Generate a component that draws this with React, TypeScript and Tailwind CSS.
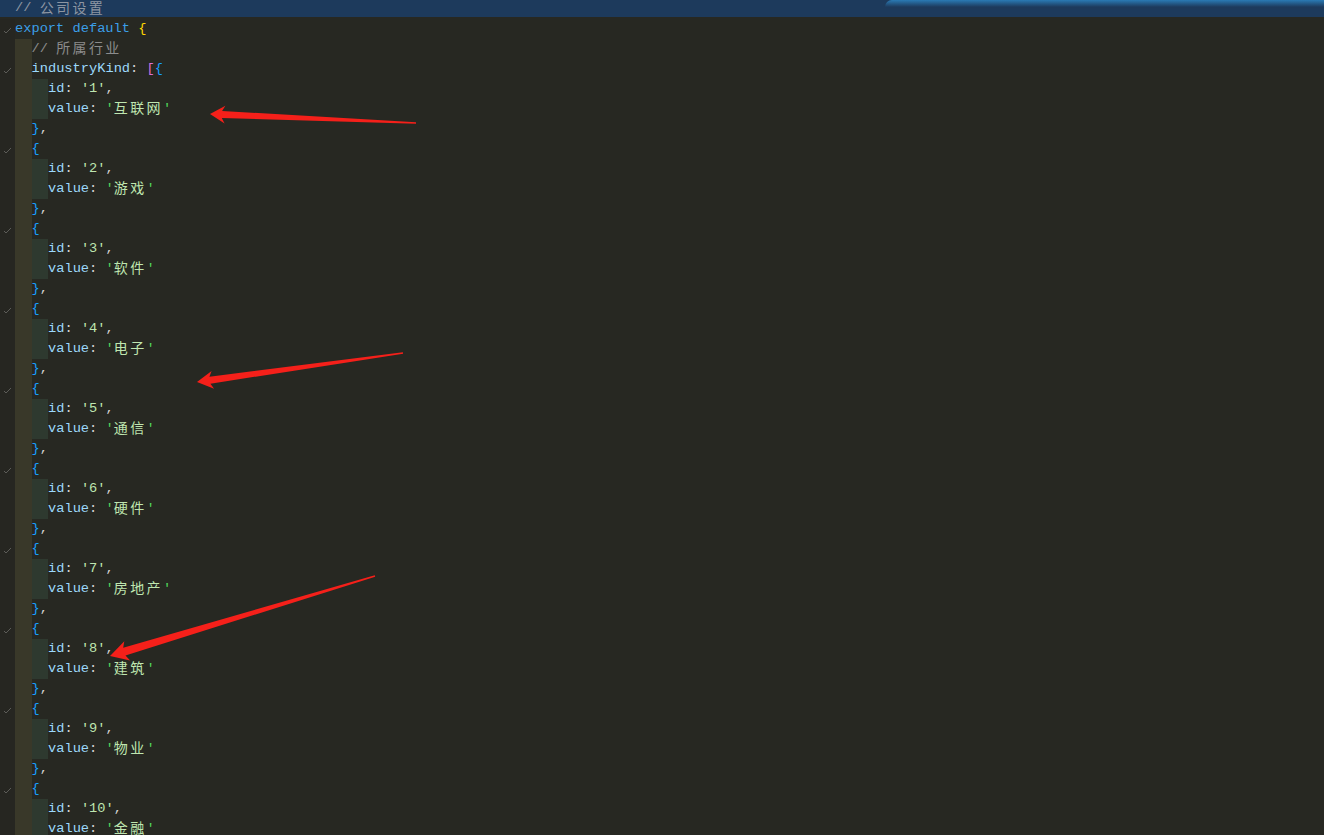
import React from "react";

type Seg = { t: string; c: string; cjk?: boolean };
type Line = { depth: number; segs: Seg[]; check?: boolean };

const C = {
  kw: "#3b9fe8",
  prop: "#9cd8fb",
  str: "#bfe6b0",
  q: "#52d45a",
  com: "#8c8c8c",
  pun: "#d4d4d4",
  gold: "#ffd700",
  orchid: "#da70d6",
  blue: "#179fff",
};

const values = ["互联网", "游戏", "软件", "电子", "通信", "硬件", "房地产", "建筑", "物业", "金融"];

const buildLines = (): Line[] => {
  const lines: Line[] = [
    {
      depth: 0,
      check: true,
      segs: [{ t: "export default", c: C.kw }, { t: " ", c: C.pun }, { t: "{", c: C.gold }],
    },
    { depth: 1, segs: [{ t: "// ", c: C.com }, { t: "所属行业", c: C.com, cjk: true }] },
    {
      depth: 1,
      check: true,
      segs: [
        { t: "industryKind", c: C.prop },
        { t: ": ", c: C.pun },
        { t: "[", c: C.orchid },
        { t: "{", c: C.blue },
      ],
    },
  ];
  values.forEach((v, i) => {
    if (i > 0) {
      lines.push({ depth: 1, segs: [{ t: "}", c: C.blue }, { t: ",", c: C.pun }] });
      lines.push({ depth: 1, check: true, segs: [{ t: "{", c: C.blue }] });
    }
    lines.push({
      depth: 2,
      segs: [
        { t: "id", c: C.prop },
        { t: ": ", c: C.pun },
        { t: "'", c: C.str },
        { t: String(i + 1), c: C.str },
        { t: "'", c: C.str },
        { t: ",", c: C.pun },
      ],
    });
    lines.push({
      depth: 2,
      segs: [
        { t: "value", c: C.prop },
        { t: ": ", c: C.pun },
        { t: "'", c: C.q },
        { t: v, c: C.str, cjk: true },
        { t: "'", c: C.q },
      ],
    });
  });
  return lines;
};

// arrow polygon from tail (t) to tip (p)
const arrow = (tx: number, ty: number, px: number, py: number, L: number, W: number, w: number, w0: number) => {
  const dx = px - tx;
  const dy = py - ty;
  const len = Math.hypot(dx, dy);
  const ux = dx / len;
  const uy = dy / len;
  const nx = -uy;
  const ny = ux;
  const neckX = px - ux * (L - 3);
  const neckY = py - uy * (L - 3);
  const barbX = px - ux * L;
  const barbY = py - uy * L;
  const pts = [
    [tx + nx * w0, ty + ny * w0],
    [neckX + nx * w, neckY + ny * w],
    [barbX + nx * W, barbY + ny * W],
    [px, py],
    [barbX - nx * W, barbY - ny * W],
    [neckX - nx * w, neckY - ny * w],
    [tx - nx * w0, ty - ny * w0],
  ];
  return pts.map((p) => `${p[0].toFixed(1)},${p[1].toFixed(1)}`).join(" ");
};

const Check = () => (
  <svg width="9" height="7" viewBox="0 0 9 7" className="mt-[2px]">
    <polyline points="1,4 3,6 8,1" fill="none" stroke="#5c5c58" strokeWidth="1" />
  </svg>
);

const CodeText = ({ segs }: { segs: Seg[] }) => (
  <div className="whitespace-pre h-[20px] leading-[20px]">
    {segs.map((s, j) =>
      s.cjk ? (
        <span
          key={j}
          className="inline-block align-top h-[20px] leading-[16px] text-[14px] tracking-[2.4px]"
          style={{ color: s.c, fontFamily: '"Noto Sans CJK SC", sans-serif' }}
        >
          {s.t}
        </span>
      ) : (
        <span key={j} style={{ color: s.c }}>
          {s.t}
        </span>
      )
    )}
  </div>
);

const App = () => {
  const lines = buildLines();
  return (
    <div
      className="relative w-[1324px] h-[835px] overflow-hidden bg-[#272822] text-[13.7px]"
      style={{ fontFamily: '"Liberation Mono", "Noto Sans CJK SC", monospace' }}
    >
      {/* highlighted first line */}
      <div className="flex h-[17px] bg-[#1d3a5c] overflow-hidden">
        <div className="w-[15px] shrink-0" />
        <div className="whitespace-pre leading-[16px]">
          <span style={{ color: "#8d96a2" }}>// </span>
          <span
            className="inline-block align-top h-[16px] leading-[14px] text-[14px] tracking-[2.4px]"
            style={{ color: "#8d96a2", fontFamily: '"Noto Sans CJK SC", sans-serif' }}
          >
            公司设置
          </span>
        </div>
      </div>

      <div className="flex flex-col pt-[2px]">
        {lines.map((line, i) => (
          <div key={i} className="flex h-[20px]">
            <div className="w-[15px] shrink-0 flex items-center justify-center bg-[#262621]">
              {line.check && <Check />}
            </div>
            {line.depth >= 1 && <div className="w-[16.5px] shrink-0 bg-[#393829]" />}
            {line.depth >= 2 && <div className="w-[16.5px] shrink-0 bg-[#2e392f]" />}
            <CodeText segs={line.segs} />
          </div>
        ))}
      </div>

      {/* top-right glow on the highlighted line */}
      <div className="absolute top-0 left-[885px] right-0 h-[7px] bg-gradient-to-b from-[#2a7ab4] to-transparent rounded-tl-[40px]" />

      <svg className="absolute inset-0 pointer-events-none" width="1324" height="835">
        <polygon points={arrow(416, 123, 210, 114, 15, 9, 3.5, 0.8)} fill="#f5201a" />
        <polygon points={arrow(403, 353, 197, 382, 16, 9, 3.5, 0.8)} fill="#f5201a" />
        <polygon points={arrow(375, 576, 110, 656, 18, 10, 4, 0.8)} fill="#f5201a" />
      </svg>
    </div>
  );
};

export default App;
